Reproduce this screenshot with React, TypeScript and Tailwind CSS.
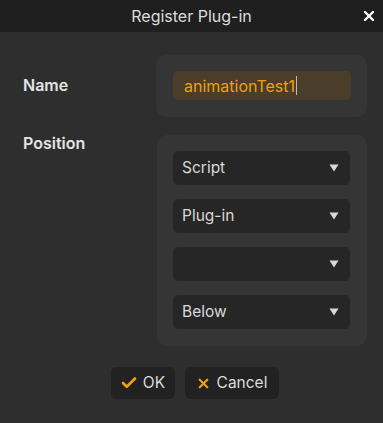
import { Check, X } from 'lucide-react';

function Select({ value }: { value: string }) {
  return (
    <div className="h-[34px] rounded-[5px] bg-[#262626] flex items-center justify-between pl-[9px] pr-[11px] text-[15.5px] text-[#d8d8d8]">
      <span>{value}</span>
      <svg width="10" height="8" viewBox="0 0 10 8" className="text-[#d8d8d8]">
        <path d="M0.5 0.5 L9.5 0.5 L5 7.5 Z" fill="currentColor" />
      </svg>
    </div>
  );
}

export default function App() {
  return (
    <div
      className="w-[383px] h-[423px] bg-[#2e2e2e] flex flex-col"
      style={{ fontFamily: 'Inter, "Noto Sans", sans-serif' }}
    >
      <div className="h-[32px] bg-[#1f1f1f] relative flex items-center justify-center text-[16px] text-[#dcdcdc]">
        Register Plug-in
        <X className="absolute right-[6px] top-[8px] text-white" size={16} strokeWidth={3.5} />
      </div>

      <div className="flex pt-[23px] pr-[16px]">
        <div className="w-[156px] pl-[23px] pt-[18px] text-[16px] leading-[24px] font-semibold text-[#e4e4e4]">Name</div>
        <div className="flex-1 rounded-[10px] bg-[#353535] pt-[16px] pb-[17px] pl-[17px] pr-[16px]">
          <div className="h-[29px] rounded-[5px] bg-[#4a3d29] flex items-center pl-[11px] text-[16px] text-[#f0a010]">
            animationTest1<span className="w-[1px] h-[19px] bg-[#bbbbbb] ml-[1px]" />
          </div>
        </div>
      </div>

      <div className="flex pt-[18px] pr-[16px]">
        <div className="w-[157px] pl-[23px] -mt-[4px] text-[16px] leading-[24px] font-semibold text-[#e4e4e4]">Position</div>
        <div className="flex-1 rounded-[10px] bg-[#353535] pt-[16px] pb-[17px] pl-[16px] pr-[17px] flex flex-col gap-[14px]">
          <Select value="Script" />
          <Select value="Plug-in" />
          <Select value="" />
          <Select value="Below" />
        </div>
      </div>

      <div className="flex justify-center gap-[10px] pt-[21px] pl-[6px]">
        <button className="h-[32px] w-[64px] rounded-[5px] bg-[#222222] flex items-center justify-center gap-[5px] text-[15.5px] text-[#dcdcdc]">
          <Check size={18} strokeWidth={3.5} className="text-[#f0a010]" />
          OK
        </button>
        <button className="h-[32px] w-[94px] rounded-[5px] bg-[#222222] flex items-center justify-center gap-[6px] text-[15.5px] text-[#dcdcdc]">
          <X size={15} strokeWidth={3.5} className="text-[#f0a010]" />
          Cancel
        </button>
      </div>
    </div>
  );
}
